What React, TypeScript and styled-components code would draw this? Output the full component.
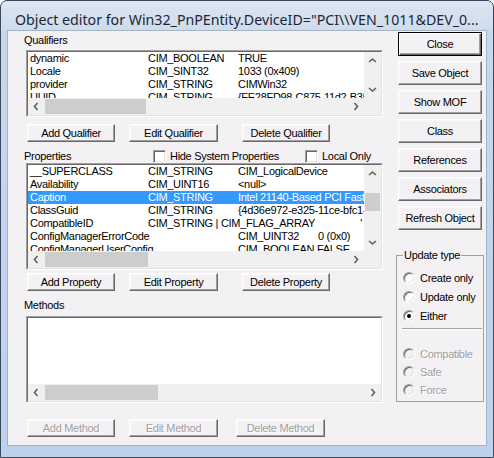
import React from "react"
import styled, { createGlobalStyle, css } from "styled-components"

const GlobalStyle = createGlobalStyle`
  html, body {
    margin: 0;
    padding: 0;
    background: #ffffff;
    overflow: hidden;
  }
  body {
    font-family: "Liberation Sans", Arial, sans-serif;
    font-size: 11px;
    letter-spacing: -0.3px;
    color: #000;
  }
  * {
    box-sizing: border-box;
  }
`

const clientBg = "#f4f1f4"

type Cell = { t: string; w?: number; right?: boolean }
type Row = { cells: Cell[]; selected?: boolean }

const qualifierRows: Row[] = [
  { cells: [{ t: "dynamic", w: 118 }, { t: "CIM_BOOLEAN", w: 90 }, { t: "TRUE" }] },
  { cells: [{ t: "Locale", w: 118 }, { t: "CIM_SINT32", w: 90 }, { t: "1033 (0x409)" }] },
  { cells: [{ t: "provider", w: 118 }, { t: "CIM_STRING", w: 90 }, { t: "CIMWin32" }] },
  { cells: [{ t: "UUID", w: 118 }, { t: "CIM_STRING", w: 90 }, { t: "{FE28FD98-C875-11d2-B352-00104BC97924}" }] },
]

const propertyRows: Row[] = [
  { cells: [{ t: "__SUPERCLASS", w: 118 }, { t: "CIM_STRING", w: 90 }, { t: "CIM_LogicalDevice" }] },
  { cells: [{ t: "Availability", w: 118 }, { t: "CIM_UINT16", w: 90 }, { t: "<null>" }] },
  {
    cells: [{ t: "Caption", w: 118 }, { t: "CIM_STRING", w: 90 }, { t: "Intel 21140-Based PCI Fast Ethernet Adapter" }],
    selected: true,
  },
  { cells: [{ t: "ClassGuid", w: 118 }, { t: "CIM_STRING", w: 90 }, { t: "{4d36e972-e325-11ce-bfc1-08002be10318}" }] },
  { cells: [{ t: "CompatibleID", w: 118 }, { t: "CIM_STRING | CIM_FLAG_ARRAY" }, { t: "'", right: true }] },
  { cells: [{ t: "ConfigManagerErrorCode", w: 208 }, { t: "CIM_UINT32", w: 80 }, { t: "0 (0x0)" }] },
  { cells: [{ t: "ConfigManagerUserConfig", w: 208 }, { t: "CIM_BOOLEAN FALSE" }] },
]

const Window = styled.div`
  width: 494px;
  height: 458px;
  border: 1px solid #3b4859;
  border-radius: 7px 7px 0 0;
  background: linear-gradient(#dde6f1 0px, #cfdcec 29px, #c5d8ee 30px, #bcd2ec 100%);
  display: flex;
  flex-direction: column;
  padding: 0 6px 11px 6px;
  overflow: hidden;
`

const TitleBar = styled.div`
  height: 29px;
  flex: 0 0 29px;
  display: flex;
  align-items: center;
  padding: 8px 0 0 8px;
  font-family: "Noto Sans", "Open Sans", sans-serif;
  font-size: 14.2px;
  letter-spacing: 0;
  color: #1b2636;
  white-space: nowrap;
  overflow: hidden;
`

const Client = styled.div`
  flex: 1;
  display: flex;
  background: ${clientBg};
  border: 1px solid #a6b3c3;
`

const LeftCol = styled.div`
  width: 375px;
  flex: 0 0 375px;
  display: flex;
  flex-direction: column;
  padding: 3px 0 0 16px;
`

const RightCol = styled.div`
  width: 88px;
  flex: 0 0 88px;
  margin-left: 13px;
  display: flex;
  flex-direction: column;
  padding-top: 1px;
`

const Label = styled.div<{ $mt?: number }>`
  line-height: 13px;
  height: 13px;
  margin-top: ${(p) => p.$mt ?? 0}px;
  white-space: nowrap;
`

const ListFrame = styled.div<{ $h: number; $mt: number }>`
  width: 357px;
  height: ${(p) => p.$h}px;
  margin: ${(p) => p.$mt}px 0 0 2px;
  border: 1px solid;
  border-color: #a0a0a0 #ffffff #ffffff #a0a0a0;
`

const ListInner = styled.div<{ $vscroll: boolean }>`
  width: 100%;
  height: 100%;
  border: 1px solid;
  border-color: #696969 #e3e3e3 #e3e3e3 #696969;
  background: #ffffff;
  display: grid;
  grid-template-columns: ${(p) => (p.$vscroll ? "1fr 17px" : "1fr")};
  grid-template-rows: 1fr 17px;
  overflow: hidden;
`

const Rows = styled.div`
  overflow: hidden;
  min-width: 0;
`

const RowLine = styled.div<{ $selected?: boolean }>`
  height: 13px;
  line-height: 13px;
  display: flex;
  white-space: nowrap;
  padding-left: 2px;
  overflow: hidden;
  ${(p) =>
    p.$selected &&
    css`
      background: #3399ff;
      color: #ffffff;
    `}
`

const RowCell = styled.span<{ $w?: number; $right?: boolean }>`
  flex: ${(p) => (p.$w ? `0 0 ${p.$w}px` : "0 0 auto")};
  ${(p) =>
    p.$right &&
    css`
      margin-left: auto;
      padding-right: 2px;
    `}
`

const HScroll = styled.div`
  grid-column: 1;
  grid-row: 2;
  display: flex;
  background: #f0f0f0;
  min-width: 0;
`

const VScroll = styled.div`
  grid-column: 2;
  grid-row: 1;
  display: flex;
  flex-direction: column;
  background: #f0f0f0;
`

const Corner = styled.div`
  grid-column: 2;
  grid-row: 2;
  background: #f0f0f0;
`

const Track = styled.div<{ $vertical?: boolean }>`
  flex: 1;
  display: flex;
  flex-direction: ${(p) => (p.$vertical ? "column" : "row")};
  min-width: 0;
  min-height: 0;
`

const Thumb = styled.div<{ $offset: number; $size: number; $vertical?: boolean }>`
  background: #cdcdcd;
  ${(p) =>
    p.$vertical
      ? css`
          margin: ${p.$offset}px 1px 0 1px;
          height: ${p.$size}px;
        `
      : css`
          margin: 1px 0 1px ${p.$offset}px;
          width: ${p.$size}px;
        `}
`

const ArrowBox = styled.div`
  flex: 0 0 17px;
  width: 17px;
  height: 17px;
  display: flex;
  align-items: center;
  justify-content: center;
`

const chevrons: Record<string, string> = {
  left: "9.5,5 6.5,8.5 9.5,12",
  right: "7.5,5 10.5,8.5 7.5,12",
  up: "5,10 8.5,7 12,10",
  down: "5,7 8.5,10 12,7",
}

const Arrow = ({ dir }: { dir: "left" | "right" | "up" | "down" }) => (
  <ArrowBox>
    <svg width="17" height="17" viewBox="0 0 17 17">
      <polyline points={chevrons[dir]} fill="none" stroke="#606060" strokeWidth="1.6" />
    </svg>
  </ArrowBox>
)

type ListProps = {
  rows: Row[]
  height: number
  mt: number
  hThumb: [number, number]
  vThumb?: [number, number] | null
  vscroll: boolean
}

const List = ({ rows, height, mt, hThumb, vThumb, vscroll }: ListProps) => (
  <ListFrame $h={height} $mt={mt}>
    <ListInner $vscroll={vscroll}>
      <Rows>
        {rows.map((r, i) => (
          <RowLine key={i} $selected={r.selected}>
            {r.cells.map((c, j) => (
              <RowCell key={j} $w={c.w} $right={c.right}>
                {c.t}
              </RowCell>
            ))}
          </RowLine>
        ))}
      </Rows>
      {vscroll && (
        <VScroll>
          <Arrow dir="up" />
          <Track $vertical>{vThumb && <Thumb $vertical $offset={vThumb[0]} $size={vThumb[1]} />}</Track>
          <Arrow dir="down" />
        </VScroll>
      )}
      <HScroll>
        <Arrow dir="left" />
        <Track>
          <Thumb $offset={hThumb[0]} $size={hThumb[1]} />
        </Track>
        <Arrow dir="right" />
      </HScroll>
      {vscroll && <Corner />}
    </ListInner>
  </ListFrame>
)

const ButtonRow = styled.div<{ $mt: number }>`
  display: flex;
  margin: ${(p) => p.$mt}px 0 0 3px;
`

const Btn = styled.button<{ $w: number; $h: number; $ml?: number; $default?: boolean }>`
  width: ${(p) => p.$w}px;
  height: ${(p) => p.$h}px;
  margin-left: ${(p) => p.$ml ?? 0}px;
  padding: 0;
  font-family: "Liberation Sans", Arial, sans-serif;
  font-size: 11px;
  letter-spacing: -0.3px;
  line-height: 13px;
  color: #000;
  background: ${clientBg};
  border: 1px solid;
  border-color: #ffffff #696969 #696969 #ffffff;
  box-shadow: inset -1px -1px #a0a0a0, inset 1px 1px #f8f8f8;
  white-space: nowrap;
  &:disabled {
    color: #a0a0a0;
    text-shadow: 1px 1px #ffffff;
  }
  ${(p) =>
    p.$default &&
    css`
      border-color: #000000;
      box-shadow: inset 1px 1px #ffffff, inset -1px -1px #696969, inset -2px -2px #a0a0a0;
    `}
`

const CheckRow = styled.div`
  display: flex;
  align-items: center;
  height: 14px;
  margin-top: 7px;
`

const CheckItem = styled.label<{ $w?: number }>`
  display: flex;
  align-items: center;
  gap: 4px;
  ${(p) => p.$w && `flex: 0 0 ${p.$w}px;`}
  white-space: nowrap;
`

const Box = styled.span`
  width: 13px;
  height: 13px;
  flex: 0 0 13px;
  background: #ffffff;
  border: 1px solid;
  border-color: #a0a0a0 #ffffff #ffffff #a0a0a0;
  box-shadow: inset 1px 1px #696969, inset -1px -1px #e3e3e3;
`

const RightBtnStack = styled.div`
  display: flex;
  flex-direction: column;
  gap: 5px;
  padding-left: 2px;
`

const Group = styled.fieldset`
  margin: 19px 0 0 0;
  padding: 6px 0 2px 6px;
  border: 1px solid #a0a0a0;
  width: 88px;
  min-width: 0;
`

const Legend = styled.legend`
  padding: 0 1px;
  line-height: 13px;
  white-space: nowrap;
`

const RadioRow = styled.label<{ $h: number; $disabled?: boolean; $mt?: number }>`
  display: flex;
  align-items: center;
  gap: 5px;
  height: ${(p) => p.$h}px;
  margin-top: ${(p) => p.$mt ?? 0}px;
  white-space: nowrap;
  color: ${(p) => (p.$disabled ? "#a0a0a0" : "#000")};
  ${(p) => p.$disabled && "text-shadow: 1px 1px #ffffff;"}
`

const Circle = styled.span<{ $checked?: boolean; $disabled?: boolean }>`
  width: 12px;
  height: 12px;
  flex: 0 0 12px;
  border-radius: 50%;
  background: ${(p) => (p.$disabled ? clientBg : "#ffffff")};
  border: 1px solid;
  border-color: #a0a0a0 #ffffff #ffffff #a0a0a0;
  box-shadow: inset 1px 1px #696969, inset -1px -1px #e3e3e3;
  display: flex;
  align-items: center;
  justify-content: center;
  &::after {
    content: "";
    width: 4px;
    height: 4px;
    border-radius: 50%;
    background: ${(p) => (p.$checked ? "#000" : "transparent")};
  }
`

const Separator = styled.div`
  height: 2px;
  margin: 3px 1px 0 -1px;
  border-top: 1px solid #a0a0a0;
  border-bottom: 1px solid #ffffff;
`

const Radio = ({
  label,
  h,
  checked,
  disabled,
  mt,
}: {
  label: string
  h: number
  checked?: boolean
  disabled?: boolean
  mt?: number
}) => (
  <RadioRow $h={h} $disabled={disabled} $mt={mt}>
    <Circle $checked={checked} $disabled={disabled} />
    {label}
  </RadioRow>
)

export default function App() {
  return (
    <>
      <GlobalStyle />
      <Window>
        <TitleBar>Object editor for Win32_PnPEntity.DeviceID="PCI\\VEN_1011&amp;DEV_0...</TitleBar>
        <Client>
          <LeftCol>
            <Label>Qualifiers</Label>
            <List rows={qualifierRows} height={67} mt={3} hThumb={[0, 101]} vThumb={null} vscroll />
            <ButtonRow $mt={7}>
              <Btn $w={88} $h={18}>Add Qualifier</Btn>
              <Btn $w={89} $h={18} $ml={14}>Edit Qualifier</Btn>
              <Btn $w={88} $h={18} $ml={24}>Delete Qualifier</Btn>
            </ButtonRow>

            <CheckRow>
              <CheckItem $w={129}>Properties</CheckItem>
              <CheckItem $w={152}>
                <Box />
                Hide System Properties
              </CheckItem>
              <CheckItem>
                <Box />
                Local Only
              </CheckItem>
            </CheckRow>
            <List rows={propertyRows} height={107} mt={0} hThumb={[0, 103]} vThumb={[11, 18]} vscroll />
            <ButtonRow $mt={3}>
              <Btn $w={88} $h={18}>Add Property</Btn>
              <Btn $w={89} $h={18} $ml={14}>Edit Property</Btn>
              <Btn $w={88} $h={18} $ml={24}>Delete Property</Btn>
            </ButtonRow>

            <Label $mt={8}>Methods</Label>
            <List rows={[]} height={87} mt={4} hThumb={[0, 113]} vscroll={false} />
            <ButtonRow $mt={16}>
              <Btn $w={88} $h={18} disabled>Add Method</Btn>
              <Btn $w={89} $h={18} $ml={14} disabled>Edit Method</Btn>
              <Btn $w={89} $h={18} $ml={18} disabled>Delete Method</Btn>
            </ButtonRow>
          </LeftCol>

          <RightCol>
            <RightBtnStack>
              <Btn $w={84} $h={24} $default>Close</Btn>
              <Btn $w={84} $h={24}>Save Object</Btn>
              <Btn $w={84} $h={24}>Show MOF</Btn>
              <Btn $w={84} $h={24}>Class</Btn>
              <Btn $w={84} $h={24}>References</Btn>
              <Btn $w={84} $h={24}>Associators</Btn>
              <Btn $w={84} $h={24}>Refresh Object</Btn>
            </RightBtnStack>
            <Group>
              <Legend>Update type</Legend>
              <Radio label="Create only" h={19} />
              <Radio label="Update only" h={19} />
              <Radio label="Either" h={19} checked />
              <Separator />
              <Radio label="Compatible" h={18} disabled mt={15} />
              <Radio label="Safe" h={18} disabled />
              <Radio label="Force" h={18} disabled />
            </Group>
          </RightCol>
        </Client>
      </Window>
    </>
  )
}
